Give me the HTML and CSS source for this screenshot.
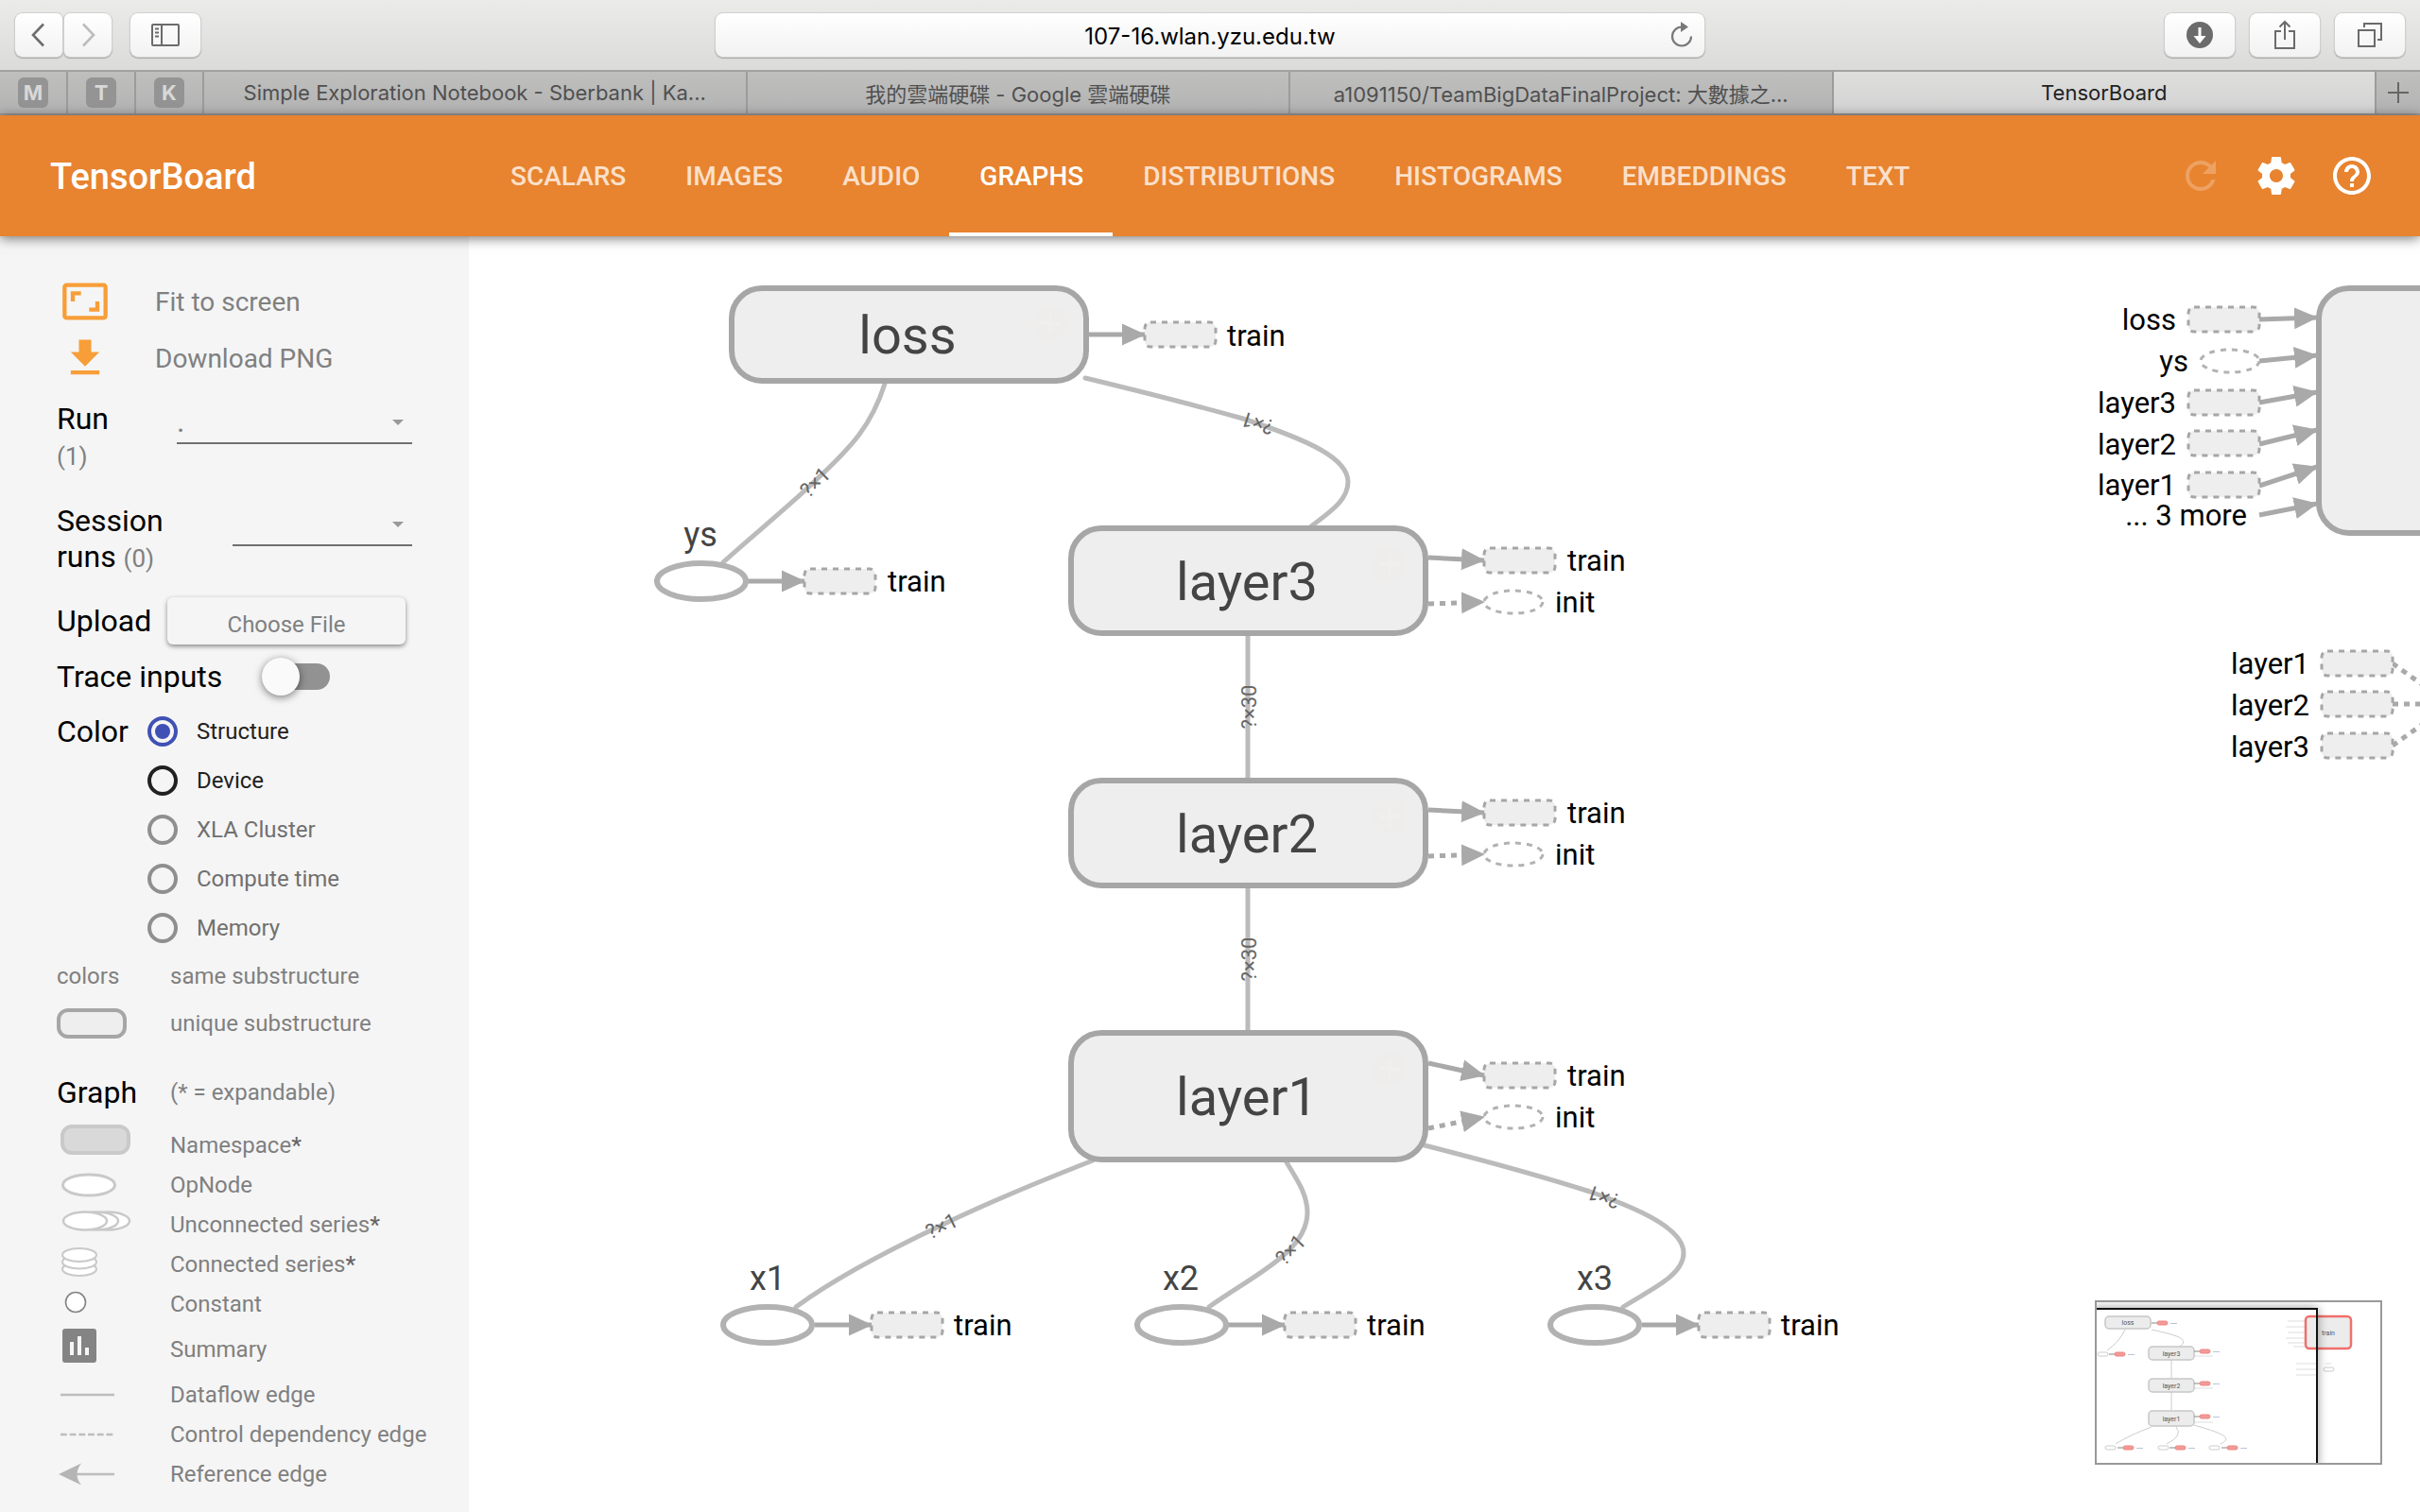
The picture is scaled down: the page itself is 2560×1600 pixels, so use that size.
FILE: index.html
```html
<!DOCTYPE html>
<html lang="en">
<head>
<meta charset="utf-8">
<title>TensorBoard</title>
<link rel="stylesheet" href="styles.css">
</head>
<body>
<div class="browser">
  <div class="toolbar">
    <div class="tools">
      <div class="history">
        <button class="tool tool-back" aria-label="Back"><svg width="16" height="26" viewBox="0 0 16 26"><path d="M13 1.500 2 13l11 11.500" fill="none" stroke="#6e6e6e" stroke-width="2.600"/></svg></button>
        <button class="tool tool-forward" aria-label="Forward"><svg width="16" height="26" viewBox="0 0 16 26"><path d="M3 1.500 14 13 3 24.500" fill="none" stroke="#bdbdbd" stroke-width="2.600"/></svg></button>
      </div>
      <button class="tool" aria-label="Show sidebar"><svg width="30" height="24" viewBox="0 0 30 24"><g fill="none" stroke="#6b6b6b" stroke-width="2"><rect x="1" y="1" width="28" height="22" rx="1"/><path d="M11 1v22M4 5.500h4M4 9.500h4M4 13.500h4"/></g></svg></button>
    </div>
    <div class="address">
      <input class="address-input" type="text" value="107-16.wlan.yzu.edu.tw" aria-label="Address">
      <button class="reload" aria-label="Reload page"><svg width="24" height="28" viewBox="0 0 24 28"><path d="M12 5.500A10 10 0 1 0 22 15.500" fill="none" stroke="#787878" stroke-width="2.200"/><path d="M11 0v11l8-5.500z" fill="#787878"/></svg></button>
    </div>
    <div class="tools tools-end">
      <button class="tool" aria-label="Downloads"><svg width="28" height="28" viewBox="0 0 28 28"><circle cx="14" cy="14" r="14" fill="#6b6b6b"/><path d="M12.500 6h3v9h5L14 23l-6.500-8h5z" fill="#fff"/></svg></button>
      <button class="tool" aria-label="Share"><svg width="24" height="32" viewBox="0 0 24 32"><path d="M8 12H2v18h20V12h-6M12 21V2M6.500 7.500 12 2l5.500 5.500" fill="none" stroke="#6b6b6b" stroke-width="2"/></svg></button>
      <button class="tool" aria-label="Show all tabs"><svg width="26" height="26" viewBox="0 0 26 26"><path d="M1 8h17v17H1zM7 5V1h18v17h-4" fill="none" stroke="#6b6b6b" stroke-width="2"/></svg></button>
    </div>
  </div>
  <div class="tabs">
    <a class="tab" href="#m"><span class="pin">M</span></a>
    <a class="tab" href="#t"><span class="pin">T</span></a>
    <a class="tab" href="#k"><span class="pin">K</span></a>
    <a class="tab" href="#notebook">Simple Exploration Notebook - Sberbank | Ka...</a>
    <a class="tab" href="#drive">我的雲端硬碟 - Google 雲端硬碟</a>
    <a class="tab" href="#project">a1091150/TeamBigDataFinalProject: 大數據之...</a>
    <a class="tab tab-active" href="#tensorboard">TensorBoard</a>
    <button class="tab tab-new" aria-label="New tab"><svg width="22" height="22" viewBox="0 0 22 22"><path d="M11 0v22M0 11h22" stroke="#666" stroke-width="2"/></svg></button>
  </div>
</div>

<header class="header">
  <h1 class="brand">TensorBoard</h1>
  <nav class="nav">
    <a class="nav-link" href="#scalars">SCALARS</a>
    <a class="nav-link" href="#images">IMAGES</a>
    <a class="nav-link" href="#audio">AUDIO</a>
    <a class="nav-link nav-active" href="#graphs">GRAPHS</a>
    <a class="nav-link" href="#distributions">DISTRIBUTIONS</a>
    <a class="nav-link" href="#histograms">HISTOGRAMS</a>
    <a class="nav-link" href="#embeddings">EMBEDDINGS</a>
    <a class="nav-link" href="#text">TEXT</a>
  </nav>
  <div class="actions">
    <button class="action" aria-label="Refresh" disabled><svg viewBox="0 0 24 24"><path d="M17.650 6.350C16.200 4.900 14.210 4 12 4c-4.420 0-7.990 3.580-7.990 8s3.570 8 7.990 8c3.730 0 6.840-2.550 7.730-6h-2.080c-.82 2.330-3.040 4-5.650 4-3.310 0-6-2.690-6-6s2.690-6 6-6c1.660 0 3.140.69 4.220 1.780L13 11h7V4l-2.350 2.350z"/></svg></button>
    <button class="action" aria-label="Settings"><svg viewBox="0 0 24 24"><path d="M19.430 12.980c.04-.32.070-.64.070-.98s-.03-.66-.07-.98l2.110-1.650c.19-.15.240-.42.120-.64l-2-3.460c-.12-.22-.39-.3-.61-.22l-2.490 1c-.52-.4-1.080-.73-1.690-.98l-.38-2.650C14.460 2.180 14.250 2 14 2h-4c-.25 0-.46.180-.49.420l-.38 2.650c-.61.250-1.170.59-1.690.980l-2.490-1c-.23-.09-.49 0-.61.220l-2 3.460c-.13.220-.07.490.12.640l2.110 1.650c-.04.320-.07.650-.07.980s.030.660.070.980l-2.110 1.650c-.19.150-.24.420-.12.640l2 3.460c.12.220.39.300.61.220l2.490-1c.52.400 1.080.730 1.690.980l.38 2.650c.03.240.24.420.49.420h4c.25 0 .46-.18.490-.42l.38-2.650c.61-.25 1.170-.59 1.690-.98l2.490 1c.23.090.49 0 .61-.22l2-3.460c.12-.22.070-.49-.12-.64l-2.110-1.650zM12 15.500c-1.930 0-3.500-1.570-3.500-3.500s1.570-3.500 3.500-3.500 3.500 1.570 3.500 3.500-1.570 3.500-3.500 3.500z"/></svg></button>
    <button class="action" aria-label="Help"><svg viewBox="0 0 24 24"><path d="M11 18h2v-2h-2v2zm1-16C6.480 2 2 6.480 2 12s4.480 10 10 10 10-4.480 10-10S17.520 2 12 2zm0 18c-4.410 0-8-3.590-8-8s3.590-8 8-8 8 3.590 8 8-3.590 8-8 8zm0-14c-2.210 0-4 1.790-4 4h2c0-1.100.9-2 2-2s2 .9 2 2c0 2-3 1.750-3 5h2c0-2.250 3-2.500 3-5 0-2.210-1.790-4-4-4z"/></svg></button>
  </div>
</header>

<div class="workspace">
  <aside class="sidebar">
    <div class="commands">
      <button class="command"><svg viewBox="0 0 24 24"><path d="M19 12h-2v3h-3v2h5v-5zM7 9h3V7H5v5h2V9zm14-6H3c-1.100 0-2 .9-2 2v14c0 1.100.9 2 2 2h18c1.100 0 2-.9 2-2V5c0-1.100-.9-2-2-2zm0 16.010H3V4.990h18v14.020z"/></svg>Fit to screen</button>
      <button class="command"><svg viewBox="0 0 24 24"><path d="M19 9h-4V3H9v6H5l7 7 7-7zM5 18v2h14v-2H5z"/></svg>Download PNG</button>
    </div>

    <div class="field">
      <label class="field-label run-label" for="run">Run <span class="count">(1)</span></label>
      <span class="picker"><select id="run"><option>.</option></select></span>
    </div>
    <div class="field session">
      <label class="field-label session-label" for="session"><span class="line">Session</span> <span>runs</span> <span class="count">(0)</span></label>
      <span class="picker"><select id="session"><option></option></select></span>
    </div>
    <div class="upload">
      <span class="field-label">Upload</span>
      <button class="choose">Choose File</button>
    </div>
    <div class="trace">
      <label class="field-label trace-label" for="trace">Trace inputs</label>
      <input class="toggle" type="checkbox" id="trace">
    </div>
    <div class="color">
      <span class="field-label color-label">Color</span>
      <div class="options">
        <label class="option"><input type="radio" name="color" checked>Structure</label>
        <label class="option"><input type="radio" name="color">Device</label>
        <label class="option"><input type="radio" name="color" disabled>XLA Cluster</label>
        <label class="option"><input type="radio" name="color" disabled>Compute time</label>
        <label class="option"><input type="radio" name="color" disabled>Memory</label>
      </div>
    </div>
    <div class="swatches">
      <span>colors</span><span>same substructure</span>
      <span class="swatch"></span><span>unique substructure</span>
    </div>

    <div class="legend-head"><h2 class="field-label">Graph</h2><span>(* = expandable)</span></div>
    <ul class="legend">
      <li><svg viewBox="0 0 100 42"><rect x="6" y="1" width="70" height="28" rx="10" fill="#d9d9d9" stroke="#c9c9c9" stroke-width="4"/></svg><span>Namespace<b>*</b></span></li>
      <li><svg viewBox="0 0 100 42"><ellipse cx="34" cy="21" rx="27.500" ry="11" fill="#fff" stroke="#c9c9c9" stroke-width="3"/></svg><span>OpNode</span></li>
      <li><svg viewBox="0 0 100 42"><g fill="#fff" stroke="#c9c9c9" stroke-width="2.500"><ellipse cx="54" cy="17" rx="23" ry="9.500"/><ellipse cx="42" cy="17" rx="23" ry="9.500"/><ellipse cx="30" cy="17" rx="23" ry="9.500"/></g></svg><span>Unconnected series<b>*</b></span></li>
      <li><svg viewBox="0 0 100 42"><g fill="#fff" stroke="#c9c9c9" stroke-width="2"><ellipse cx="24" cy="26" rx="18" ry="7"/><ellipse cx="24" cy="18.500" rx="18" ry="7"/><ellipse cx="24" cy="11" rx="18" ry="7"/></g></svg><span>Connected series<b>*</b></span></li>
      <li><svg viewBox="0 0 100 42"><circle cx="20" cy="19" r="10.500" fill="#fff" stroke="#848484" stroke-width="1.600"/></svg><span>Constant</span></li>
      <li class="legend-tall"><svg viewBox="0 0 100 42"><path fill="#848484" fill-rule="evenodd" d="M9-1h30a3 3 0 0 1 3 3v30a3 3 0 0 1-3 3H9a3 3 0 0 1-3-3V2a3 3 0 0 1 3-3zM14 13v14h4V13zM22 7v20h4V7zM30 19v8h4v-8z"/></svg><span>Summary</span></li>
      <li><svg viewBox="0 0 100 42"><path d="M4 21h57" stroke="#bdbdbd" stroke-width="2.600"/></svg><span>Dataflow edge</span></li>
      <li><svg viewBox="0 0 100 42"><path d="M4 21h57" stroke="#bdbdbd" stroke-width="2.600" stroke-dasharray="6.800 2.900"/></svg><span>Control dependency edge</span></li>
      <li><svg viewBox="0 0 100 42"><path d="M20 21h41" stroke="#bdbdbd" stroke-width="2.600"/><path d="M2 21 26 9.500q-9 11.500 0 23z" fill="#b5b5b5"/></svg><span>Reference edge</span></li>
    </ul>
  </aside>

  <main class="canvas">
    <svg class="graph" aria-label="Model graph">
      <defs>
        <marker id="head" markerUnits="userSpaceOnUse" markerWidth="26" markerHeight="24" refX="24" refY="12" orient="auto"><path d="M0 .5 25 12 0 23.500z" fill="#a9a9a9"/></marker>
        <g id="plus"><circle r="18" fill="#efedec"/><path d="M-11 0h22M0-11v22" stroke="#f0efee" stroke-width="4"/></g>
        <g id="out"><path class="link" marker-end="url(#head)" d="M-60 0H0"/><rect class="note" x="0" y="-13" width="75" height="26" rx="6"/></g>
        <rect id="note" class="note" y="-13" width="75" height="26" rx="6"/>
        <ellipse id="op" class="op" rx="47" ry="19"/>
        <ellipse id="op-note" class="op-note" rx="31" ry="12"/>
      </defs>
      <g transform="translate(-496 -250)">
        <g class="edges">
          <path d="M936 406C922 450 902 472 861 510C840 531 790 572 765 595"/>
          <path d="M1148 400C1210 415 1265 429 1315 443C1385 466 1426 485 1426 510C1426 530 1405 543 1387 557"/>
          <path d="M1320 672V824M1320 939V1091"/>
          <path d="M1156 1228C1100 1250 1040 1275 995 1297C940 1323 880 1355 842 1383"/>
          <path d="M1361 1230C1372 1248 1383 1264 1383 1283C1383 1325 1325 1350 1279 1383"/>
          <path d="M1507 1212C1570 1228 1635 1246 1682 1261C1745 1283 1781 1303 1781 1326C1781 1350 1745 1365 1717 1383"/>
        </g>
        <g class="shapes">
          <text transform="translate(862 510) rotate(-44)" y="8">?×1</text>
          <text transform="translate(1330 448) rotate(198)" y="8">?×1</text>
          <text transform="translate(1321 748) rotate(-90)" y="8">?×30</text>
          <text transform="translate(1321 1015) rotate(-90)" y="8">?×30</text>
          <text transform="translate(996 1297) rotate(-26)" y="8">?×1</text>
          <text transform="translate(1365 1322) rotate(-46)" y="8">?×1</text>
          <text transform="translate(1696 1267) rotate(199)" y="8">?×1</text>
        </g>

        <rect class="scope" x="774" y="305" width="375" height="98" rx="32"/>
        <rect class="scope" x="1133" y="559" width="375" height="111" rx="32"/>
        <rect class="scope" x="1133" y="826" width="375" height="111" rx="32"/>
        <rect class="scope" x="1133" y="1093" width="375" height="134" rx="32"/>
        <rect class="scope" x="2453" y="305" width="375" height="259" rx="32"/>
        <use href="#plus" x="1111" y="342"/><use href="#plus" x="1470" y="597"/><use href="#plus" x="1470" y="864"/><use href="#plus" x="1470" y="1131"/>
        <g class="scope-names">
          <text x="960" y="374">loss</text>
          <text x="1319" y="635">layer3</text>
          <text x="1319" y="902">layer2</text>
          <text x="1319" y="1180">layer1</text>
        </g>

        <use href="#out" x="1211" y="354"/>
        <use href="#out" x="851" y="615"/>
        <use href="#out" x="922" y="1402"/>
        <use href="#out" x="1359" y="1402"/>
        <use href="#out" x="1797" y="1402"/>
        <use href="#op" x="742" y="615"/>
        <use href="#op" x="812" y="1402"/>
        <use href="#op" x="1250" y="1402"/>
        <use href="#op" x="1687" y="1402"/>
        <g class="op-names">
          <text x="741" y="578">ys</text>
          <text x="812" y="1365">x1</text>
          <text x="1249" y="1365">x2</text>
          <text x="1687" y="1365">x3</text>
        </g>

        <use href="#note" x="1570" y="593"/><use href="#note" x="1570" y="860"/><use href="#note" x="1570" y="1138"/>
        <use href="#op-note" x="1601" y="637"/><use href="#op-note" x="1601" y="904"/><use href="#op-note" x="1601" y="1182"/>
        <g class="links">
          <path class="link" d="M1511 590L1570 593"/><path class="link" d="M1511 857L1570 860"/><path class="link" d="M1511 1125L1570 1138"/>
          <path class="link dashed" d="M1511 639L1570 637"/><path class="link dashed" d="M1511 906L1570 904"/><path class="link dashed" d="M1511 1194L1570 1182"/>
          <path class="link" d="M2390 338L2451 336"/><path class="link" d="M2390 382L2451 376"/><path class="link" d="M2390 426L2451 415"/><path class="link" d="M2390 470L2451 455"/><path class="link" d="M2390 514L2451 494"/><path class="link" d="M2390 545L2451 533"/>
        </g>
        <path class="link dashed" d="M2531 702L2590 744M2531 745H2590M2531 789L2590 747"/>
        <use href="#note" x="2315" y="338"/><use href="#op-note" x="2359" y="382"/><use href="#note" x="2315" y="426"/><use href="#note" x="2315" y="469"/><use href="#note" x="2315" y="513"/>
        <use href="#note" x="2456" y="702"/><use href="#note" x="2456" y="745"/><use href="#note" x="2456" y="789"/>

        <g class="note-names">
          <text x="1298" y="366">train</text><text x="939" y="626">train</text>
          <text x="1658" y="604">train</text><text x="1645" y="648">init</text>
          <text x="1658" y="871">train</text><text x="1645" y="915">init</text>
          <text x="1658" y="1149">train</text><text x="1645" y="1193">init</text>
          <text x="1009" y="1413">train</text><text x="1446" y="1413">train</text><text x="1884" y="1413">train</text>
        </g>
        <g class="note-names note-names-end">
          <text x="2302" y="349">loss</text><text x="2315" y="393">ys</text><text x="2302" y="437">layer3</text><text x="2302" y="481">layer2</text><text x="2302" y="524">layer1</text><text x="2377" y="556">... 3 more</text>
          <text x="2443" y="713">layer1</text><text x="2443" y="757">layer2</text><text x="2443" y="801">layer3</text>
        </g>
      </g>
    </svg>

    <div class="minimap">
      <svg viewBox="0 0 300 170">
        <defs><g id="pill"><path d="M-6 0H0" stroke="#888" stroke-width="1"/><rect y="-2" width="11" height="4" rx="2" fill="#f29a98" stroke="#ef8683"/><path d="M14 .5h7" stroke="#b9c4d6" stroke-width="1"/></g></defs>
        <g fill="none" stroke="#ccc" stroke-width="1">
          <path d="M30 29Q24 42 11 51M58 29C80 34 100 38 88 47M79 61v19M79 95v19M58 132Q34 141 20 150M84 132Q92 141 74 150M103 130C130 138 146 143 131 150"/>
          <path d="M202 20h18M200 26h20M202 32h18M200 38h20M202 43h18M208 47h12M211 65h22M211 71h22M211 77h22M240 71h10M242 65h6M103 57h20M103 91h20M103 127h20" stroke="#ddd"/>
        </g>
        <g fill="#ececec" stroke="#c6c6c6" stroke-width="1.500">
          <rect x="9" y="15" width="48" height="13" rx="4"/><rect x="55" y="47" width="48" height="14" rx="4"/><rect x="55" y="81" width="48" height="14" rx="4"/><rect x="55" y="115" width="48" height="16" rx="4"/>
        </g>
        <rect x="221" y="15" width="48" height="34" rx="4" fill="#ececec" stroke="#ef6f6c" stroke-width="2.500"/>
        <g fill="#fff" stroke="#ccc"><rect x="1" y="53" width="11" height="4" rx="2"/><rect x="9" y="152" width="11" height="4" rx="2"/><rect x="65" y="152" width="11" height="4" rx="2"/><rect x="119" y="152" width="11" height="4" rx="2"/><rect x="240" y="69" width="11" height="4" rx="2"/></g>
        <use href="#pill" x="64" y="22"/><use href="#pill" x="19" y="55"/><use href="#pill" x="109" y="52"/><use href="#pill" x="109" y="86"/><use href="#pill" x="109" y="121"/><use href="#pill" x="28" y="154"/><use href="#pill" x="83" y="154"/><use href="#pill" x="138" y="154"/>
        <g class="mini-names"><text x="33" y="24">loss</text><text x="79" y="57">layer3</text><text x="79" y="91">layer2</text><text x="79" y="126">layer1</text><text x="245" y="35">train</text></g>
      </svg>
      <div class="viewport"></div>
    </div>
  </main>
</div>
</body>
</html>
```
FILE: styles.css
```css
* { box-sizing: border-box; }

body {
  margin: 0;
  min-height: 100vh;
  display: flex;
  flex-direction: column;
  font-family: Roboto, "Noto Sans", sans-serif;
  color: #000;
  background: #fff;
}

button, input, select { font: inherit; color: inherit; margin: 0; }
button { border: 0; padding: 0; background: none; }
a { color: inherit; text-decoration: none; }
h1, h2, ul { margin: 0; padding: 0; font-weight: 400; list-style: none; }
svg { display: block; flex: none; }

/* Browser window */
.browser { font-family: Inter, "Noto Sans CJK TC", sans-serif; }

.toolbar {
  display: grid;
  grid-template-columns: 1fr 41.4% 1fr;
  align-items: center;
  height: 76px;
  padding: 0 16px;
  background: linear-gradient(#ebebe9, #dbdbda);
  border-bottom: 2px solid #a2a2a2;
}

.tools { display: flex; gap: 20px; }
.tools-end { justify-content: flex-end; gap: 16px; }
.history { display: flex; gap: 2px; }

.tool {
  display: flex;
  align-items: center;
  justify-content: center;
  width: 74px;
  height: 46px;
  border-radius: 8px;
  background: linear-gradient(#fff, #f2f2f2);
  box-shadow: 0 0 0 1px #d0d0d0, 0 1px 1px 1px #a8a8a8;
}
.tool-back { width: 50px; border-radius: 8px 6px 6px 8px; }
.tool-forward { width: 50px; border-radius: 6px 8px 8px 6px; }

.address {
  display: flex;
  align-items: center;
  height: 46px;
  padding: 0 12px 0 36px;
  border-radius: 8px;
  background: linear-gradient(#fff, #f2f2f2);
  box-shadow: 0 0 0 1px #d0d0d0, 0 1px 1px 1px #a8a8a8;
}
.address-input {
  flex: 1;
  min-width: 0;
  border: 0;
  padding: 4px 0 0;
  background: none;
  font-size: 24px;
  line-height: 30px;
  text-align: center;
}

.tabs {
  display: grid;
  grid-template-columns: 72px 72px 72px repeat(4, 1fr) 46px;
  height: 46px;
  background: linear-gradient(#bfbfbe, #b3b3b3);
  border-bottom: 2px solid #9a9a9a;
  font-size: 22px;
  color: #505050;
}
.tab {
  display: flex;
  align-items: center;
  justify-content: center;
  min-width: 0;
  border-right: 2px solid #9c9c9c;
  white-space: nowrap;
  overflow: hidden;
}
.tab-active { background: linear-gradient(#dededd, #d2d2d2); color: #222; }
.tab-new { border-right: 0; }
.pin {
  width: 32px;
  height: 32px;
  border-radius: 6px;
  background: #949494;
  color: #d8d8d8;
  font-weight: 700;
  line-height: 32px;
  text-align: center;
}

/* TensorBoard header */
.header {
  position: relative;
  z-index: 1;
  display: flex;
  height: 128px;
  padding-right: 32px;
  background: #e8832f;
  box-shadow: 0 2px 12px rgba(0, 0, 0, .55);
  color: #fff;
}
.brand { width: 508px; padding-left: 53px; font-size: 38px; font-weight: 500; line-height: 130px; }
.nav { display: flex; flex: 1; }
.nav-link {
  padding: 0 31px 0 32px;
  border-bottom: 4px solid transparent;
  font-size: 28px;
  font-weight: 500;
  line-height: 130px;
  color: #fae0cb;
}
.nav-active { border-color: #fff; color: #fff; }
.actions { display: flex; align-items: center; }
.action { width: 80px; padding: 16px; }
.action svg { width: 48px; height: 48px; fill: #fff; }
.action:disabled { opacity: .25; }

/* Sidebar */
.workspace { display: flex; flex: 1; }
.sidebar {
  width: 496px;
  flex: none;
  padding: 43px 60px 19px;
  background: #f5f5f5;
  font-size: 24px;
  color: #808080;
}
.commands { display: flex; flex-direction: column; gap: 8px; }
.command { display: flex; align-items: center; gap: 48px; height: 52px; padding-left: 4px; font-size: 28px; }
.command svg { width: 52px; height: 52px; fill: #f79e38; }

.field { display: flex; margin-top: 19px; height: 76px; }
.session { margin-top: 32px; }
.field-label { font-size: 32px; line-height: 38px; color: #000; }
.run-label { width: 127px; padding-right: 60px; }
.session-label { width: 186px; padding-right: 60px; }
.line { display: block; }
.count { font-size: 26px; color: #808080; }
.picker { position: relative; flex: 1; height: 46px; }
.picker::after {
  content: "";
  position: absolute;
  right: 9px;
  top: 20px;
  border: 6px solid transparent;
  border-top-color: #999;
  border-bottom: 0;
}
.picker select {
  width: 100%;
  height: 100%;
  border: 0;
  border-bottom: 2px solid #707070;
  border-radius: 0;
  padding: 0;
  appearance: none;
  background: none;
  font-size: 32px;
}

.upload { display: flex; align-items: center; justify-content: space-between; margin-top: 24px; height: 50px; padding-right: 7px; }
.choose { width: 252px; height: 50px; padding-top: 8px; border-radius: 6px; background: #f5f5f5; box-shadow: 0 2px 5px rgba(0, 0, 0, .45); }

.trace { display: flex; align-items: center; margin-top: 14px; height: 40px; }
.trace-label { width: 217px; }
.toggle {
  appearance: none;
  position: relative;
  width: 72px;
  height: 40px;
}
.toggle::before {
  content: "";
  position: absolute;
  inset: 6px 0 6px 4px;
  border-radius: 14px;
  background: #929292;
}
.toggle::after {
  content: "";
  position: absolute;
  left: 0;
  top: 0;
  width: 40px;
  height: 40px;
  border-radius: 20px;
  background: #fafafa;
  box-shadow: 0 2px 8px rgba(0, 0, 0, .5);
}

.color { display: flex; margin-top: 12px; }
.color-label { width: 96px; line-height: 52px; }
.option { display: flex; align-items: center; gap: 20px; height: 52px; color: #212121; }
.option input {
  appearance: none;
  display: grid;
  place-content: center;
  width: 32px;
  height: 32px;
  border: 4px solid #212121;
  border-radius: 16px;
}
.option input:checked { border-color: #3f51b5; }
.option input:checked::before { content: ""; width: 16px; height: 16px; border-radius: 8px; background: #3f51b5; }
.option input:disabled { border-color: #8f8f8f; }
.option:has(:disabled) { color: #707070; }

.swatches { display: grid; grid-template-columns: 120px 1fr; grid-auto-rows: 50px; align-items: center; }
.swatch { width: 74px; height: 32px; border: 4px solid #a6a6a6; border-radius: 12px; background: #eee; }

.legend-head { display: grid; grid-template-columns: 120px 1fr; align-items: center; height: 40px; margin: 28px 0 15px; }
.legend li { display: grid; grid-template-columns: 120px 1fr; align-items: center; height: 42px; white-space: nowrap; }
.legend .legend-tall { height: 54px; }
.legend svg { width: 100px; height: 42px; overflow: visible; }
.legend b { font-weight: 500; color: #666; }

/* Graph */
.canvas { position: relative; flex: 1; min-width: 0; overflow: hidden; }
.graph { position: absolute; inset: 0; width: 100%; height: 100%; }
.edges { fill: none; stroke: #bbb; stroke-width: 5; stroke-linecap: round; }
.shapes { font-size: 22px; fill: #666; text-anchor: middle; }
.scope { fill: #eee; stroke: #a6a6a6; stroke-width: 6; }
.scope-names { font-size: 56px; fill: #444; text-anchor: middle; }
.op { fill: #fff; stroke: #b2b2b2; stroke-width: 6; }
.op-names { font-size: 36px; fill: #444; text-anchor: middle; }
.note { fill: #eee; stroke: #a6a6a6; stroke-width: 3; stroke-dasharray: 6 6; }
.op-note { fill: #fff; stroke: #b2b2b2; stroke-width: 3; stroke-dasharray: 6 6; }
.note-names { font-size: 31px; fill: #000; }
.note-names-end { text-anchor: end; }
.link { fill: none; stroke: #a9a9a9; stroke-width: 5; }
.links .link { marker-end: url(#head); }
.dashed { stroke-dasharray: 6 6; }

.minimap {
  position: absolute;
  right: 40px;
  bottom: 50px;
  width: 304px;
  height: 174px;
  border: 2px solid #999;
  background: #fff;
  overflow: hidden;
}
.viewport {
  position: absolute;
  inset: 6px 66px -4px -4px;
  border: 2px solid #111;
  box-shadow: 0 0 10px rgba(0, 0, 0, .4);
}
.mini-names { font-size: 7px; fill: #555; text-anchor: middle; }
```
